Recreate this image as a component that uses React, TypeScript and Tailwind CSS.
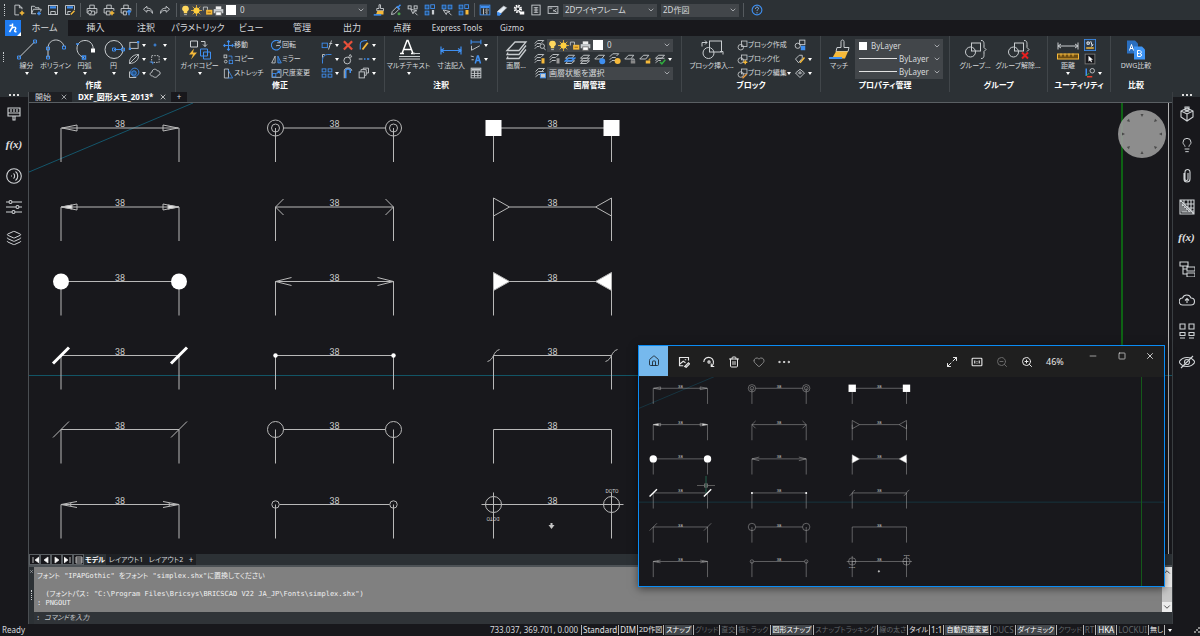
import React from "react";
import clsx from "clsx";
import {
  ChevronDown,
  CloudUpload,
  Ellipsis,
  EyeOff,
  Heart,
  House,
  Layers,
  Lightbulb,
  Maximize2,
  Minus,
  Paperclip,
  Square,
  Trash2,
  X,
  ZoomIn,
  ZoomOut,
} from "lucide-react";

const W = "#c9cdd0";
const B = "#3f8ff0";
const Y = "#f5b93a";

//small drawings, all on a 16 x 16 grid
const icons: Record<string, React.ReactNode> = {
  newFile: (
    <>
      <path d="M12 7V5L8.500 1.500H2.500v13H8M8.500 1.500V5H12" />
      <path d="M12 9v6M9 12h6" stroke={Y} strokeWidth="2" />
    </>
  ),
  open: (
    <>
      <path d="M2 13V3h4l1.500 2H12v2M2 13l2.500-6H15l-1 3M2 13h6" />
      <path d="M9.500 12.500h5M12 10v5" stroke={B} strokeWidth="2" />
    </>
  ),
  save: (
    <>
      <rect x="2" y="2" width="12" height="12" />
      <path d="M4 4.500h8" stroke={B} strokeWidth="3" />
      <path d="M5 14v-4h6v4" />
    </>
  ),
  saveAs: (
    <>
      <path d="M8 14H2V2h12v6M5 13v-3h4" />
      <path d="M4 4.500h8" stroke={B} strokeWidth="3" />
      <path d="M9 14l5-5" stroke={Y} strokeWidth="2" />
    </>
  ),
  print: (
    <>
      <path d="M5 6V1.500h6V6M4 12H1.500V6h13v6H12M4.500 9.500h7v5h-7z" />
      <circle cx="5" cy="11" r="2.500" fill="#2c3135" />
    </>
  ),
  printStar: (
    <>
      <path d="M5 6V1.500h6V6M4 12H1.500V6h13v3M4.500 9.500h5v5h-5z" />
      <path d="M12 9v6M9 12h6" stroke={Y} strokeWidth="2" />
    </>
  ),
  printUp: (
    <>
      <path d="M5 6V1.500h6V6M4 12H1.500V6h13v3M4.500 9.500h4v5h-4z" />
      <path d="M12 15V9M9.500 11L12 8.500l2.500 2.500" stroke={B} strokeWidth="2" />
    </>
  ),
  undo: <path d="M6.500 3L2 7l4.500 4V8.500c4 0 6 .5 7.500 4 0-5-3-7-7.500-7z" />,
  redo: <path d="M9.500 3L14 7l-4.500 4V8.500c-4 0-6 .5-7.500 4 0-5 3-7 7.500-7z" />,
  bulb: (
    <>
      <path d="M8 1a4.500 4.500 0 0 0-2.500 8.500V12h5V9.500A4.500 4.500 0 0 0 8 1z" fill="#ffd75e" stroke="none" />
      <path d="M6 14h4" />
    </>
  ),
  sun: (
    <>
      <path d="M8 0v16M0 8h16M2.500 2.500l11 11M13.500 2.500l-11 11" stroke={Y} />
      <circle cx="8" cy="8" r="4.500" fill="#ffcf3f" stroke="none" />
    </>
  ),
  lock: (
    <>
      <path d="M2 8V3h6v4" />
      <rect x="6" y="7" width="9" height="7" fill={Y} stroke="none" />
      <path d="M8 10.500h5" stroke="#8a5a10" />
    </>
  ),
  printer: (
    <>
      <rect x="4" y="2" width="8" height="4" fill="#eee" stroke="none" />
      <rect x="1" y="6" width="14" height="6" fill={W} stroke="none" />
      <rect x="4" y="10" width="8" height="5" fill="#fff" stroke="#666" />
    </>
  ),
  brush: (
    <>
      <path d="M8 1h2v5h4v3H5V6h3z" />
      <path d="M4 14l2-5h8v5z" fill={Y} stroke="none" />
      <path d="M1 14.500h10" stroke={B} strokeWidth="2" />
    </>
  ),
  dropper: (
    <>
      <path d="M2 14l1-4 6-6 3 3-6 6z" />
      <path d="M9 3l4 4M11 4l3-3" stroke={B} strokeWidth="2" />
      <circle cx="12" cy="13" r="2" fill="#4aa04a" stroke="none" />
    </>
  ),
  select: (
    <>
      <rect x="1.500" y="2.500" width="4" height="4" />
      <rect x="9.500" y="2.500" width="4" height="4" />
      <path d="M5 7l3 6 1-3 4-1zM10 11l4 4" />
    </>
  ),
  grid4: (
    <>
      <rect x="1.500" y="1.500" width="5" height="5" stroke={B} fill="#24507f" />
      <rect x="1.500" y="9.500" width="5" height="5" stroke={B} fill="#24507f" />
      <rect x="9" y="1" width="5" height="5" stroke={B} />
      <path d="M12 8v6" strokeWidth="3" />
    </>
  ),
  selectGrid: (
    <>
      <rect x="1.500" y="1.500" width="5" height="5" stroke={B} fill="#24507f" />
      <rect x="9.500" y="1.500" width="5" height="5" stroke={B} fill="#24507f" />
      <path d="M3 8l4 6 1-3 4-1zM10 11l4 4" />
    </>
  ),
  grid4y: (
    <>
      <rect x="1.500" y="1.500" width="5" height="5" stroke={B} fill="#24507f" />
      <rect x="1.500" y="9.500" width="5" height="5" stroke={B} fill="#24507f" />
      <rect x="9" y="1" width="5" height="5" stroke={B} />
      <path d="M12 8v6" stroke={Y} strokeWidth="4" />
    </>
  ),
  panel: (
    <>
      <rect x="1.500" y="1.500" width="13" height="13" stroke={B} />
      <path d="M2 4h12" stroke={B} strokeWidth="3" />
      <path d="M6 6v8M10.500 6v8M8 8h1M12 8h1M8 11h1" />
    </>
  ),
  eraser: (
    <>
      <path d="M2 10l8-7 4 2-8 8-4-1z" fill="#e6eef5" />
      <path d="M2 11l5 2-2 2H2z" fill={B} stroke={B} />
    </>
  ),
  gear: (
    <>
      <circle cx="6.500" cy="6.500" r="4" strokeWidth="3" strokeDasharray="2 1.140" stroke="#fff" />
      <circle cx="6.500" cy="6.500" r="2.500" stroke="#fff" />
      <rect x="9" y="10" width="6" height="4" fill="#fff" stroke="none" />
    </>
  ),
  sheet: (
    <>
      <rect x="2.500" y="1.500" width="11" height="13" />
      <path d="M5 5h6M5 8h6M5 11h6M8 4v8" />
    </>
  ),
  rename: (
    <>
      <rect x="1.500" y="3.500" width="13" height="9" />
      <path d="M3 5.500h4M9 10l4-4M8 8l5 3" />
    </>
  ),
  help: (
    <>
      <circle cx="8" cy="8" r="6.500" stroke={B} strokeWidth="1.500" />
      <path d="M6 6.500c0-3 4-3 4-.5 0 1.500-2 1.500-2 3M8 11v1.500" stroke="#8cc0ff" />
    </>
  ),
  rect: (
    <>
      <rect x="2.500" y="4.500" width="11" height="8" />
      <path d="M1 13h3M12 4h3" stroke={B} strokeWidth="3" />
    </>
  ),
  point: <path d="M8 6v4M6 8h4" stroke={B} strokeWidth="1.500" />,
  ellipse: <path d="M2 14C1 7 7 2 14 2c1 7-5 12-12 12zM2 14L14 2" />,
  region: (
    <>
      <rect x="3.500" y="3.500" width="10" height="9" strokeDasharray="2 1.500" />
      <path d="M1 12h4v3" stroke={B} />
    </>
  ),
  hatch: (
    <>
      <circle cx="9" cy="7" r="5.500" stroke={B} />
      <circle cx="8" cy="8" r="3" stroke={B} fill="#24507f" />
      <path d="M2 6v8h9" />
    </>
  ),
  cloud: <path d="M5 12c-5 0-4-5-1-5 0-5 6-5 7-2 5 0 5 6 1 6-1 4-6 3-7 1z" />,
  move: <path d="M8 1v14M1 8h14M6 3l2-2 2 2M6 13l2 2 2-2M3 6L1 8l2 2M13 6l2 2-2 2" stroke={B} strokeWidth="1.500" />,
  copy: (
    <>
      <rect x="1.500" y="1.500" width="4" height="4" />
      <rect x="9" y="9" width="5" height="5" stroke={B} />
      <circle cx="4" cy="11" r="2" />
      <path d="M8 3h5v4" stroke={B} />
    </>
  ),
  stretch: (
    <>
      <path d="M2 1.500h6v13H2z" />
      <path d="M7 2l7 12.500H7" stroke={B} />
    </>
  ),
  rotate: (
    <>
      <path d="M13 3a7 7 0 1 0 1.500 6" stroke={B} strokeWidth="1.500" />
      <path d="M8 8h5M8 8v1" stroke={W} />
      <path d="M13.500 0v4H9" />
    </>
  ),
  mirror: (
    <>
      <path d="M6 3v10H1z" />
      <path d="M10 3v10h5z" stroke={B} fill="#24507f" />
    </>
  ),
  scale: (
    <>
      <rect x="1.500" y="2.500" width="13" height="11" />
      <rect x="2" y="8" width="5" height="5" stroke={B} />
      <path d="M8 8l4-3M9 4.500h3.500V8" stroke={B} strokeWidth="1.500" />
    </>
  ),
  trim: (
    <>
      <rect x="1.500" y="5.500" width="7" height="6" stroke={B} />
      <path d="M10 14l4-12M11 6h4" />
    </>
  ),
  erase: <path d="M2.500 3L13.500 14M13.500 3L2.500 14" stroke="#e8503a" strokeWidth="3" />,
  edit: (
    <>
      <path d="M3 14V7c0-4 4-5 9-5" stroke={B} strokeWidth="1.500" />
      <path d="M6 14l7-9" stroke={Y} strokeWidth="2.500" />
    </>
  ),
  fillet: (
    <>
      <path d="M2 14V9c0-4 3-7 7-7h5" stroke={B} />
      <path d="M2 2v4M2 2l3 0" />
    </>
  ),
  explode: (
    <>
      <circle cx="7" cy="10" r="4.500" />
      <path d="M9 5l2-3 2 3-3 1" />
    </>
  ),
  breakLine: (
    <>
      <path d="M1 8h5" />
      <path d="M8 8h2M12 8h3" stroke={B} strokeWidth="2" />
    </>
  ),
  array: (
    <g stroke={B}>
      <rect x="1.500" y="2.500" width="5" height="4" />
      <rect x="9.500" y="2.500" width="5" height="4" />
      <rect x="1.500" y="9.500" width="5" height="4" />
      <rect x="9.500" y="9.500" width="5" height="4" />
    </g>
  ),
  join: (
    <>
      <path d="M5 15V5c0-3 6-3 6 0v3" stroke={B} strokeWidth="2" />
      <path d="M3 15V5c0-5 10-5 10 0" />
    </>
  ),
  offset: (
    <>
      <rect x="1.500" y="6.500" width="7" height="8" />
      <path d="M4 6V3.500h7V11H9M7 3V1.500h7V8h-3" />
    </>
  ),
  dimAlign: (
    <>
      <path d="M1.500 1v6M14.500 1v6M1.500 4h13" stroke={B} strokeWidth="1.500" />
      <path d="M2 9v6M2 15L13 9" />
    </>
  ),
  textA: (
    <>
      <path d="M1 4l4 1M2 9h3" />
      <path d="M7 14l3-10h1l3 10M8 10h5" stroke={B} strokeWidth="2" />
    </>
  ),
  table: (
    <>
      <rect x="1.500" y="1.500" width="13" height="13" />
      <path d="M1.500 5h13M1.500 8.500h13M1.500 11.500h13M6 5v9M10.500 5v9" />
      <path d="M2 3h12" strokeWidth="2" />
    </>
  ),
  layer: <path d="M2 14l4-3.500h8L10 14zM2 10.500L6 7h8l-4 3.500zM2 7l4-4h8l-4 4z" />,
  layerBulb: (
    <>
      <path d="M1 13l3-3h5M1 9.500L4 6h5M1 6l4-4h8l-3 3" />
      <path d="M12 7v7" stroke={Y} strokeWidth="4" />
    </>
  ),
  layerGray: (
    <>
      <path d="M1 13l3-3h5M1 9.500L4 6h5M1 6l4-4h8l-3 3" />
      <path d="M12 7v7" strokeWidth="4" stroke="#999" />
    </>
  ),
  layerBlue: (
    <>
      <path d="M2 14l4-3.500h8L10 14zM2 7l4-4h8l-4 4z" />
      <path d="M2 10.500L6 7h8l-4 3.500z" stroke={B} strokeWidth="2" />
    </>
  ),
  layerFreeze: (
    <>
      <path d="M1 8l5-5h8l-4 5z" />
      <circle cx="11" cy="11" r="4" fill={B} stroke="none" />
    </>
  ),
  layerSun: (
    <>
      <path d="M1 13l3-3h4M1 9l3-3h5M1 5l4-4h8l-3 3" />
      <circle cx="11.500" cy="10.500" r="4" fill={Y} stroke="none" />
    </>
  ),
  layerLock: (
    <>
      <path d="M1 8l5-5h7l-4 5z" />
      <rect x="9" y="10" width="6" height="4" fill="#888" stroke="none" />
      <path d="M10.500 10V8h3v2" />
    </>
  ),
  layerOpen: (
    <>
      <path d="M1 8l5-5h7l-4 5z" />
      <rect x="9" y="10" width="6" height="4" fill={Y} stroke="none" />
      <path d="M13.500 10V8h2" stroke={Y} />
    </>
  ),
  layerCheck: (
    <>
      <path d="M2 13l4-3h3M2 10L6 7h8M2 7l4-4h8l-4 4z" />
      <path d="M8 12l2.500 2.500L15 9" stroke="#2fae3d" strokeWidth="2" />
    </>
  ),
  layerState: (
    <>
      <path d="M2 13l4-3h2M2 9.500L6 6h7M2 6l4-4h8l-4 4" />
      <rect x="8.500" y="8.500" width="7" height="6" fill={W} stroke={B} />
    </>
  ),
  layerSearch: (
    <>
      <path d="M1 13l3-3h3M1 9.500L4 6h5M1 6l4-4h8l-3 3" />
      <circle cx="11" cy="9.500" r="3" />
      <path d="M13 12l2.500 3" />
    </>
  ),
  block: (
    <>
      <rect x="6.500" y="1.500" width="8" height="8" />
      <circle cx="5.500" cy="10.500" r="4" />
    </>
  ),
  blockStar: (
    <>
      <rect x="6.500" y="1.500" width="8" height="7" />
      <circle cx="5.500" cy="9.500" r="4" />
      <path d="M12 9v6M9 12h6" stroke={Y} strokeWidth="2" />
    </>
  ),
  blockEdit: (
    <>
      <rect x="6.500" y="1.500" width="8" height="7" />
      <circle cx="5.500" cy="9.500" r="4" />
      <path d="M8 15l6-6" stroke="#ef9b3a" strokeWidth="2" />
    </>
  ),
  attach: (
    <>
      <rect x="7.500" y="1.500" width="7" height="6" />
      <circle cx="5" cy="9" r="3.500" />
      <rect x="9" y="9" width="6" height="6" fill={B} stroke="none" />
    </>
  ),
  tagEdit: (
    <>
      <path d="M2 8l5-5h4v4l-5 6z" />
      <path d="M8 13l6-7" stroke={Y} strokeWidth="2" />
    </>
  ),
  tag: <path d="M2 8l6-5 6 5-6 6zM5 8h6M8 5v5" />,
  pick: (
    <>
      <rect x="0.500" y="0.500" width="15" height="15" stroke={B} fill="#2d3b4a" />
      <path d="M4 4h3v3H4zM9 3l2 6M12 7l-2 3" stroke="#fff" />
      <path d="M3 12h10" stroke={Y} strokeWidth="2" />
    </>
  ),
  cursor: (
    <>
      <rect x="1.500" y="1.500" width="13" height="13" fill="#18181c" stroke="#777" />
      <path d="M6 3.500v8l2-2 1.500 3 1-1L9.500 9H12z" fill="#fff" stroke="none" />
    </>
  ),
  axes: (
    <>
      <path d="M3 2v10" stroke={B} strokeWidth="2" />
      <path d="M4 13h7" stroke="#e8402f" strokeWidth="2" />
      <circle cx="11" cy="5" r="3" />
      <path d="M3 12l4-4" stroke="#3cb14a" />
    </>
  ),
};

//large ribbon drawings on a 24 x 20 grid
const bigIcons: Record<string, React.ReactNode> = {
  line: (
    <>
      <path d="M4 18L20 2" />
      <path d="M2.500 16.500h3v3h-3zM18.500.5h3v3h-3z" stroke={B} />
    </>
  ),
  poly: (
    <>
      <path d="M4 18V9c0-11 14-11 16-2" />
      <path d="M2.500 16.500h3v3h-3zM2.500 7.500h3v3h-3zM18.500 6.500h3v3h-3z" stroke={B} />
    </>
  ),
  arc: (
    <>
      <path d="M11 18C1 15 2 1 12 1c5 0 9 4 8 10" />
      <path d="M9.500 16.500h3v3h-3zM3 4.500h3" stroke={B} strokeWidth="1.500" />
      <rect x="18" y="9" width="4" height="4" fill="#fff" stroke="none" />
    </>
  ),
  circle: (
    <>
      <circle cx="12" cy="10" r="9" />
      <path d="M12 10h8M10.500 8.500h3v3h-3zM19.500 8.500h3v3h-3z" stroke={B} />
    </>
  ),
  guide: (
    <>
      <path d="M2.500 1.500h7v6h-7zM13 2h4v5M15 5l2 2 2-2" />
      <path d="M6 9l-5 6h4l-2 5 6-7H5z" fill={Y} stroke="none" />
      <path d="M12.500 9.500h7v7h-7zM15.500 12.500h7v7h-7z" stroke={B} />
    </>
  ),
  mtext: (
    <>
      <path d="M5 14L10 1h1l5 13M7 10h7M3 14h4M14 14h4" strokeWidth="1.500" stroke="#fff" />
      <path d="M16 14h7M2 17h21M2 19.500h21" />
    </>
  ),
  dim: <path d="M2 7v8M22 7v8M2 11h20M5 9l-3 2 3 2M19 9l3 2-3 2" stroke={B} strokeWidth="1.200" />,
  layers: (
    <path d="M3 11l8-8.500h11L15 11zM4 13l-1 2h12l7-9M4 17l-1 2h12l7-9" strokeWidth="1.300" />
  ),
  insert: (
    <>
      <rect x="9.500" y="1.500" width="12" height="11" />
      <circle cx="8.500" cy="13.500" r="5.500" />
      <path d="M2 7V3h5M5 1l2 2-2 2M20 12h3v3" />
    </>
  ),
  match: (
    <>
      <path d="M14 8V2c0-2 3-2 3 0v6h5l-1 4H9l1-4z" />
      <path d="M9 12h12l-3 7H5z" fill={Y} stroke="none" />
      <path d="M2 18.500h13" stroke={B} strokeWidth="2" />
    </>
  ),
  group: (
    <>
      <rect x="8.500" y="3.500" width="9" height="8" />
      <circle cx="7.500" cy="12.500" r="5" />
      <path d="M18 1c3 0 3 2 3 4v3l2 2-2 2v3c0 2 0 4-3 4" />
    </>
  ),
  ungroup: (
    <>
      <rect x="8.500" y="3.500" width="9" height="8" />
      <circle cx="7.500" cy="12.500" r="5" />
      <path d="M18 1c3 0 3 2 3 4v3l2 2-2 2" />
      <path d="M16 13l6 6M22 13l-6 6" stroke="#e81f1f" strokeWidth="2" />
    </>
  ),
  measure: (
    <>
      <path d="M2 3v7M22 3v7M2 6.500h20M5 4.500l-3 2 3 2M19 4.500l3 2-3 2" />
      <rect x="1.500" y="14.500" width="21" height="5" stroke={Y} fill="#6e4d12" />
      <path d="M5 14v3M9 14v3M13 14v3M17 14v3" stroke={Y} />
    </>
  ),
  compare: (
    <>
      <path d="M3 1h8l3 3v10H3z" fill="#2a6fc0" stroke="none" />
      <path d="M10 7h8l3 3v10H10z" fill="#3f95f5" stroke="none" />
      <path d="M5.500 11L7.500 5l2 6M6 9h3M13.500 11v6h2.500c2 0 2-3 0-3 2 0 1.500-3-.5-3zM13.500 14h2" stroke="#fff" />
    </>
  ),
};

const Icon = ({ name, className = "size-3" }: { name: string; className?: string }) => (
  <svg viewBox="0 0 16 16" fill="none" stroke={W} strokeWidth="1.2" className={clsx("shrink-0", className)} aria-hidden="true">
    {icons[name]}
  </svg>
);

const Caret = () => (
  <svg viewBox="0 0 4 3" className="h-[3px] w-1 shrink-0" aria-hidden="true">
    <path d="M0 0h4L2 3z" fill="#fff" />
  </svg>
);

const IconButton = ({ name, caret, label, className }: { name: string; caret?: boolean; label?: string; className?: string }) => (
  <button aria-label={label || name} className={clsx("flex h-3.5 items-center", className)}>
    <Icon name={name} />
    {caret && (
      <span className="ml-0.5">
        <Caret />
      </span>
    )}
  </button>
);

const TextButton = ({ name, text, caret }: { name: string; text: string; caret?: boolean }) => (
  <button className="flex h-3.5 items-center text-[7px] whitespace-nowrap">
    <Icon name={name} className="size-[11px]" />
    {text}
    {caret && <Caret />}
  </button>
);

const BigButton = ({ name, text, caret, className }: { name: string; text: string; caret?: boolean; className: string }) => (
  <button className={clsx("flex shrink-0 flex-col items-center pt-px", className)}>
    <svg viewBox="0 0 24 20" fill="none" stroke={W} className="h-[21px] w-6" aria-hidden="true">
      {bigIcons[name]}
    </svg>
    <span className="h-[11px] text-[7px] leading-[11px] whitespace-nowrap">{text}</span>
    {caret && (
      <span className="mt-px">
        <Caret />
      </span>
    )}
  </button>
);

const Panel = ({ title, className, children }: { title: string; className: string; children: React.ReactNode }) => (
  <section className={clsx("flex shrink-0 flex-col border-r border-[#41464a] pt-0.5", className)}>
    <div className="flex h-[42px]">{children}</div>
    <h2 className="text-center text-[8px] leading-[10px] font-bold text-white">{title}</h2>
  </section>
);

const SelectBox = ({ label, value, className, children }: { label: string; value: string; className?: string; children?: React.ReactNode }) => (
  <div className={clsx("flex shrink-0 items-center bg-[#42464a]", className)}>
    {children}
    <select aria-label={label} className="h-full min-w-0 flex-1 appearance-none bg-transparent pl-0.5 text-[8px] outline-none">
      <option>{value}</option>
    </select>
    <ChevronDown className="mr-0.5 size-2 shrink-0" />
  </div>
);

const LayerMarks = () => (
  <>
    <Icon name="bulb" className="size-[11px]" />
    <Icon name="sun" className="size-[11px]" />
    <Icon name="lock" className="size-[11px]" />
    <Icon name="printer" className="size-[11px]" />
    <span className="mx-0.5 size-2.5 shrink-0 bg-white" />
  </>
);

const Separator = ({ className }: { className: string }) => (
  <span className={clsx("flex h-3.5 shrink-0 justify-center", className)}>
    <span className="w-px bg-[#555a5e]" />
  </span>
);

const QuickButtons = ({ names }: { names: string[] }) => (
  <>
    {names.map((name) => (
      <button key={name} aria-label={name} className="flex w-[17px] shrink-0 justify-center">
        <Icon name={name} />
      </button>
    ))}
  </>
);

const QuickBar = () => (
  <div className="flex h-5 items-center bg-[#2c3135]">
    <span className="w-2.5 pl-1">
      <span className="block h-3 w-px border-l border-dotted border-[#c9cdd0]" />
    </span>
    <QuickButtons names={["newFile", "open", "save", "saveAs"]} />
    <Separator className="w-[5px]" />
    <QuickButtons names={["print", "printStar", "printUp"]} />
    <Separator className="w-[5px]" />
    <QuickButtons names={["undo", "redo"]} />
    <Separator className="w-[7px]" />
    <SelectBox label="画層" value="0" className="h-[13px] w-[187px]">
      <LayerMarks />
    </SelectBox>
    <div className="ml-[3px] flex">
      <QuickButtons names={["brush", "dropper", "select", "grid4", "selectGrid", "grid4y"]} />
    </div>
    <Separator className="w-1" />
    <QuickButtons names={["panel", "eraser", "gear", "sheet", "rename"]} />
    <SelectBox label="表示スタイル" value="2Dワイヤフレーム" className="ml-0.5 h-[13px] w-[94px]" />
    <SelectBox label="ワークスペース" value="2D作図" className="ml-1 h-[13px] w-[78px]" />
    <Separator className="w-[9px]" />
    <QuickButtons names={["help"]} />
  </div>
);

const menuTabs = [
  { name: "ホーム", width: "w-[47px] bg-[#2c3135]" },
  { name: "挿入", width: "w-[55px]" },
  { name: "注釈", width: "w-[46px]" },
  { name: "パラメトリック", width: "w-[58px]" },
  { name: "ビュー", width: "w-[48px]" },
  { name: "管理", width: "w-[54px]" },
  { name: "出力", width: "w-[46px]" },
  { name: "点群", width: "w-[54px]" },
  { name: "Express Tools", width: "w-[56px]" },
  { name: "Gizmo", width: "w-[54px]" },
];

const MenuTabs = () => (
  <nav className="flex h-4 bg-[#18181c]">
    <div className="w-[21px] bg-[#2c3135] pl-[5px]">
      <button aria-label="BricsCAD" className="flex size-4 items-center justify-center bg-[#1f7cf2]">
        <svg viewBox="0 0 16 16" className="size-4" fill="none" stroke="#fff" strokeWidth="1.5">
          <path d="M7.500 3.500v3.500L4.500 12M4.500 5.500h3M7.500 8c3-2 4 0 2.500 2-1 1.500 0 2 1.500 1.500" />
          <path d="M16 12v4h-4z" fill="#fff" stroke="none" />
        </svg>
      </button>
    </div>
    {menuTabs.map((tab) => (
      <button
        key={tab.name}
        className={clsx("shrink-0 whitespace-nowrap", tab.width, tab.name === "Express Tools" || tab.name === "Gizmo" ? "text-[8px]" : "text-[9px]")}
      >
        {tab.name}
      </button>
    ))}
  </nav>
);

const Ribbon = () => (
  <div className="flex h-14 overflow-hidden bg-[#2c3135]">
    <span className="w-3 shrink-0 pt-4 pl-[3px]">
      <span className="block h-2.5 w-px border-l border-dotted border-[#c9cdd0]" />
    </span>
    <Panel title="作成" className="w-[164px]">
      <BigButton name="line" text="線分" caret className="w-[29px]" />
      <BigButton name="poly" text="ポリライン" caret className="w-[29px]" />
      <BigButton name="arc" text="円弧" caret className="w-[29px]" />
      <BigButton name="circle" text="円" caret className="w-[29px]" />
      <div className="grid grid-cols-[21px_21px]">
        <IconButton name="rect" caret />
        <IconButton name="point" caret />
        <IconButton name="ellipse" caret />
        <IconButton name="region" caret />
        <IconButton name="hatch" caret />
        <IconButton name="cloud" />
      </div>
    </Panel>
    <Panel title="修正" className="w-[209px]">
      <BigButton name="guide" text="ガイドコピー" caret className="w-[47px]" />
      <div className="flex w-12 flex-col">
        <TextButton name="move" text="移動" />
        <TextButton name="copy" text="コピー" />
        <TextButton name="stretch" text="ストレッチ" />
      </div>
      <div className="flex w-[50px] flex-col">
        <TextButton name="rotate" text="回転" />
        <TextButton name="mirror" text="ミラー" />
        <TextButton name="scale" text="尺度変更" />
      </div>
      <div className="grid grid-cols-[21px_16px_20px]">
        <IconButton name="trim" caret />
        <IconButton name="erase" />
        <IconButton name="edit" caret />
        <IconButton name="fillet" caret />
        <IconButton name="explode" />
        <IconButton name="breakLine" caret />
        <IconButton name="array" caret />
        <IconButton name="join" />
        <IconButton name="offset" caret />
      </div>
    </Panel>
    <Panel title="注釈" className="w-[113px]">
      <BigButton name="mtext" text="マルチテキスト" caret className="w-[47px]" />
      <BigButton name="dim" text="寸法記入" className="w-[38px]" />
      <div className="flex flex-col">
        <IconButton name="dimAlign" caret />
        <IconButton name="textA" caret />
        <IconButton name="table" />
      </div>
    </Panel>
    <Panel title="画層管理" className="w-[184px]">
      <BigButton name="layers" text="画層..." className="w-[36px]" />
      <div className="flex flex-col">
        <div className="flex h-3.5 items-center gap-px">
          <Icon name="layerSearch" />
          <SelectBox label="現在の画層" value="0" className="h-[13px] w-[126px]">
            <LayerMarks />
          </SelectBox>
        </div>
        <div className="flex gap-[3px]">
          <IconButton name="layerBulb" />
          <IconButton name="layerGray" />
          <IconButton name="layerBlue" />
          <IconButton name="layer" />
          <IconButton name="layerFreeze" />
          <IconButton name="layerSun" />
          <IconButton name="layerLock" />
          <IconButton name="layerOpen" />
          <IconButton name="layerCheck" caret />
        </div>
        <div className="flex h-3.5 items-center gap-px">
          <Icon name="layerState" />
          <SelectBox label="画層状態" value="画層状態を選択" className="h-[13px] w-[126px]" />
        </div>
      </div>
    </Panel>
    <Panel title="ブロック" className="w-[139px]">
      <BigButton name="insert" text="ブロック挿入..." className="ml-1 w-[51px]" />
      <div className="flex w-[57px] flex-col">
        <TextButton name="block" text="ブロック作成" />
        <TextButton name="blockStar" text="ブロック化" />
        <TextButton name="blockEdit" text="ブロック編集" caret />
      </div>
      <div className="flex flex-col">
        <IconButton name="attach" />
        <IconButton name="tagEdit" caret />
        <IconButton name="tag" caret />
      </div>
    </Panel>
    <Panel title="プロパティ管理" className="w-[129px]">
      <BigButton name="match" text="マッチ" className="ml-0.5 w-8" />
      <div className="mt-px flex h-10 w-[88px] flex-col bg-[#42464a]">
        <SelectBox label="色" value="ByLayer" className="h-[13px]">
          <span className="mr-0.5 ml-1 size-2 bg-white" />
        </SelectBox>
        <SelectBox label="線種" value="ByLayer" className="h-[13px]">
          <span className="ml-1 h-px w-[38px] bg-[#e3e3e3]" />
        </SelectBox>
        <SelectBox label="線の太さ" value="ByLayer" className="h-[13px]">
          <span className="ml-1 h-px w-[38px] bg-[#e3e3e3]" />
        </SelectBox>
      </div>
    </Panel>
    <Panel title="グループ" className="w-[98px]">
      <BigButton name="group" text="グループ..." className="ml-[5px] w-10" />
      <BigButton name="ungroup" text="グループ解除..." className="w-[46px]" />
    </Panel>
    <Panel title="ユーティリティ" className="w-[63px]">
      <BigButton name="measure" text="距離" caret className="ml-1 w-8" />
      <div className="flex flex-col">
        <IconButton name="pick" />
        <IconButton name="cursor" />
        <IconButton name="axes" caret />
      </div>
    </Panel>
    <section className="flex w-[50px] shrink-0 flex-col pt-0.5">
      <div className="flex h-[42px] justify-center">
        <BigButton name="compare" text="DWG比較" className="w-10" />
      </div>
      <h2 className="text-center text-[8px] leading-[10px] font-bold text-white">比較</h2>
    </section>
  </div>
);

//end marks are drawn for the left side, the right side is the same mark mirrored
const marks: Record<string, React.ReactNode> = {
  closedBlank: <path d="M1 0L16-3V3z" />,
  closed: (
    <>
      <path d="M1 0L16-3V3z" />
      <path d="M0 0L11-2V2z" fill="#e5e5e5" />
    </>
  ),
  dot: <circle r="8" fill="#fff" stroke="none" />,
  archTick: <path d="M-8 8L8-8" stroke="#fff" strokeWidth="3" />,
  oblique: <path d="M-8 8L8-8" />,
  arrow: <path d="M16-3L0 0L16 3M9-1L11 0L9 1" />,
  origin2: (
    <>
      <circle r="8" />
      <circle r="4" />
    </>
  ),
  open90: <path d="M8-8L0 0L8 8" />,
  open30: <path d="M16-4L0 0L16 4" />,
  dotSmall: <circle r="2.200" fill="#fff" stroke="none" />,
  circle: <circle r="8" />,
  circleSmall: <circle r="3.700" />,
  box: <rect x="-8" y="-8" width="16" height="16" fill="#fff" stroke="none" />,
  datumBlank: <path d="M0-9L16 0L0 9z" />,
  datum: <path d="M0-9L16 0L0 9z" fill="#fff" />,
  integral: <path d="M-6 6C1 4-1-4 6-6" />,
  none: null,
  cross: (
    <>
      <circle r="8" />
      <path d="M-12 0H8M0-12V8" />
    </>
  ),
};

const flipped = ["archTick", "oblique", "integral"];

const dimensions = [
  { x: 61, rows: ["closedBlank", "closed", "dot", "archTick", "oblique", "arrow"] },
  { x: 275.5, rows: ["origin2", "open90", "open30", "dotSmall", "circle", "circleSmall"] },
  { x: 493.5, rows: ["box", "datumBlank", "datum", "integral", "none", "cross"] },
];
const rowY = [128, 207, 281.5, 355.5, 429.5, 504.5];
const insets: Record<string, number> = { origin2: 8, circle: 8, circleSmall: 4, datumBlank: 16, datum: 16 };

const Drawing = () => (
  <>
    <path d="M29 172L193 103" stroke="#15566b" />
    <path d="M29 375.500H3000" stroke="#125566" />
    <g fill="none" stroke="#b8b8b8">
      {dimensions.map((column) =>
        column.rows.map((mark, index) => {
          const inset = insets[mark] || 0;
          return (
            <g key={mark} transform={`translate(${column.x} ${rowY[index]})`}>
              <path d={`M${inset} 0H${118 - inset}M0 0V34M118 0V34`} />
              {marks[mark]}
              <g transform={flipped.includes(mark) ? "translate(118 0)" : "translate(118 0) scale(-1 1)"}>{marks[mark]}</g>
              <text x="59" y="-1" textAnchor="middle" fill="#c8c8c8" stroke="none" className="font-['Roboto',sans-serif] text-[9px]">
                38
              </text>
            </g>
          );
        })
      )}
    </g>
    <g fill="#d0d0d0" textAnchor="middle" className="font-['Roboto',sans-serif] text-[5px]">
      <text x="612" y="493">DOTO</text>
      <text transform="translate(493 517) rotate(180)">DOTO</text>
    </g>
    <path d="M550.500 523h2v2h2l-1.500 2-1.500 2-1.500-2-1.500-2h2z" fill="#c4c4c4" />
  </>
);

const Canvas = () => (
  <svg className="block min-h-[300px] w-full flex-1 bg-[#18181c]" role="img" aria-label="DXF_図形メモ_2013">
    <g transform="translate(-29 -103)">
      <Drawing />
      <path d="M1122 103V3000" stroke="#0b7d12" strokeWidth="1.500" />
      <path d="M1168.500 103V3000" stroke="#b4b4b4" />
      <circle cx="1142" cy="134" r="24" fill="#9a9a9a" fillOpacity="0.9" />
      <g fill="#4a4a4a">
        {[0, 45, 90, 135, 180, 225, 270, 315].map((angle) => (
          <path key={angle} d="M-1.500-20h3l-1.500 3z" transform={`translate(1142 134) rotate(${angle})`} />
        ))}
      </g>
    </g>
  </svg>
);

const DocTabs = () => (
  <div className="flex h-2.5 bg-[#2c3135] text-[8px] leading-[10px]">
    <div className="flex w-[43px] items-center justify-between bg-[#1e2024] pr-1 pl-1.5">
      <button>開始</button>
      <button aria-label="閉じる">
        <X className="size-2" />
      </button>
    </div>
    <div className="flex w-[99px] items-center justify-between pr-1 pl-1.5 font-bold whitespace-nowrap text-white">
      <button>DXF_図形メモ_2013*</button>
      <button aria-label="閉じる">
        <X className="size-2" />
      </button>
    </div>
    <button aria-label="新しいタブ" className="w-4 bg-[#18181c]">
      +
    </button>
  </div>
);

const navPaths = ["M2 1v6M8 1L4 4l4 3z", "M6 1L2 4l4 3z", "M2 1l4 3-4 3z", "M6 1v6M0 1l4 3-4 3z", "M1 1h6v6H1zM1 3h6M1 5h6"];

const LayoutTabs = () => (
  <div className="flex h-[11px] bg-[#2c3135] leading-[11px]">
    {navPaths.map((d, index) => (
      <button key={index} aria-label={`レイアウト移動 ${index + 1}`} className="flex w-[11px] items-center justify-center border border-[#5a5f63] bg-[#18181c]">
        <svg viewBox="0 0 8 8" className="size-2" fill={index === 4 ? "none" : "#fff"} stroke="#ddd" strokeWidth="0.800">
          <path d={d} />
        </svg>
      </button>
    ))}
    <button className="w-[22px] text-[7px] font-bold whitespace-nowrap text-white">モデル</button>
    <button className="w-10 bg-[#1e2024] text-[7px] whitespace-nowrap">レイアウト1</button>
    <button className="w-10 bg-[#1e2024] text-[7px] whitespace-nowrap">レイアウト2</button>
    <button aria-label="新しいレイアウト" className="w-2.5 bg-[#1e2024] text-[8px]">
      +
    </button>
  </div>
);

const CommandLine = () => (
  <div className="flex h-[59px] border-t-2 border-[#4d5256] bg-[#2c3135] font-['DejaVu_Sans_Mono','Noto_Sans_CJK_JP',monospace]">
    <div className="flex w-[5px] flex-col items-center pt-0.5">
      <X className="size-[5px]" />
      <span className="mt-4 h-2.5 w-px border-l border-dotted border-[#c9cdd0]" />
    </div>
    <div className="flex flex-1 flex-col">
      <div className="flex h-[45px] bg-[#808080]">
        <div className="flex-1 pt-[5px] pl-[3px] text-[7px] leading-[9px] whitespace-pre text-[#f0f0f0]">
          <p>フォント "IPAPGothic" をフォント "simplex.shx"に置換してください</p>
          <p className="mt-[9px]">{'  (フォントパス: "C:\\Program Files\\Bricsys\\BRICSCAD V22 JA_JP\\Fonts\\simplex.shx")'}</p>
          <p>: PNGOUT</p>
        </div>
        <div className="flex w-2.5 flex-col items-center justify-between bg-[#ececec] text-[#333]">
          <ChevronDown className="size-2.5 rotate-180" />
          <span className="mt-2.5 w-full flex-1 bg-[#c6c6c6]" />
          <ChevronDown className="size-2.5" />
        </div>
      </div>
      <label className="flex h-3 items-center gap-1 bg-[#303438] pl-0.5 text-[7px]">
        :
        <input
          aria-label="コマンド"
          placeholder="コマンドを入力"
          className="min-w-0 flex-1 bg-transparent italic outline-none placeholder:text-[#c9cdd0]"
        />
      </label>
    </div>
  </div>
);

const Fx = () => <span className="font-['Liberation_Serif',serif] text-[11px] font-bold text-[#e3e3e3] italic">f(x)</span>;

const leftTools = [
  <path d="M2 2h12v8H2zM2 7h12M5 3v3M8 3v3M11 3v3M7 10v4h2v-4" />,
  <Fx />,
  <>
    <circle cx="8" cy="8" r="7.300" />
    <path d="M5 8h1M7.500 5.500c1.500 1 1.500 4 0 5M9.500 3.500c3 2 3 7 0 9" />
  </>,
  <path d="M0 3h3M6 3h10M3 3a1.500 1.500 0 1 0 3 0 1.500 1.500 0 1 0-3 0M0 8h10M13 8h3M10 8a1.500 1.500 0 1 0 3 0 1.500 1.500 0 1 0-3 0M0 13h6M9 13h7M6 13a1.500 1.500 0 1 0 3 0 1.500 1.500 0 1 0-3 0" />,
  <Layers className="size-4" strokeWidth={1.5} />,
];

const rightTools = [
  <path d="M8 2l6 3v6l-6 4-6-4V5zM2 5l6 3 6-3M8 8v7M5 3.500l6 3M11 3.500l-6 3M6 1h4v3H6z" />,
  <Lightbulb className="size-4" strokeWidth={1.5} />,
  <path d="M5 5v6a3 3 0 0 0 6 0V4a2.500 2.500 0 0 0-4-2c-.7.600-1 1.200-1 2v7c0 2 3 2 3 0V5" />,
  <path d="M1 1h14v14H1zM1 1l14 14M5 1v4h10M9 1v8h6M12 1v11h3M3 5v8h8zM5 8v5M7 10v3" />,
  <Fx />,
  <path d="M1 1h8v4H1zM4 5v8h4M4 8h4M8 6h8v4H8zM8 12h8v4H8z" />,
  <path d="M4 13a3.500 3.500 0 0 1-.5-7 4.500 4.500 0 0 1 8.500 0 3.500 3.500 0 0 1 0 7zM8 11V7M6 8.500L8 6.500l2 2" />,
  <path d="M1 1h5v5H1zM10 1h5v5h-5zM1 9.500h5v3H1zM10 9.500h5v3h-5zM1 15h5M10 15h5" />,
  <path d="M0 8c4-6 12-6 16 0-4 6-12 6-16 0zM5.500 8a2.500 2.500 0 1 0 5 0 2.500 2.500 0 1 0-5 0M2 14L14 2" />,
];

const SideBar = ({ tools, className, name }: { tools: React.ReactElement[]; className: string; name: string }) => (
  <aside aria-label={name} className={clsx("shrink-0 bg-[#18181c]", className)}>
    <div className="flex h-[5px] items-center justify-center bg-[#2c3135]">
      <span className="w-2.5 border-t-2 border-dotted border-[#dddddd]" />
    </div>
    {tools.map((tool, index) => (
      <button key={index} aria-label={`${name} ${index + 1}`} className="flex h-[31px] w-full items-center justify-center pt-0.5 text-[#d0d3d6]">
        {tool.type === "path" || tool.type === React.Fragment ? (
          <svg viewBox="0 0 16 16" className="size-4" fill="none" stroke="currentColor" strokeWidth="1.1">
            {tool}
          </svg>
        ) : (
          tool
        )}
      </button>
    ))}
  </aside>
);

const statusItems = [
  { text: "Standard", state: "plain" },
  { text: "DIM", state: "plain" },
  { text: "2D作図", state: "plain" },
  { text: "スナップ", state: "on" },
  { text: "グリッド", state: "off" },
  { text: "直交", state: "off" },
  { text: "極トラック", state: "off" },
  { text: "図形スナップ", state: "on" },
  { text: "スナップトラッキング", state: "off" },
  { text: "線の太さ", state: "off" },
  { text: "タイル", state: "plain" },
  { text: "1:1", state: "plain" },
  { text: "自動尺度変更", state: "on" },
  { text: "DUCS", state: "off" },
  { text: "ダイナミック", state: "on" },
  { text: "クワッド", state: "off" },
  { text: "RT", state: "off" },
  { text: "HKA", state: "on" },
  { text: "LOCKUI", state: "off" },
  { text: "無し", state: "plain" },
];

const StatusBar = () => (
  <footer className="flex h-3 items-center bg-[#18181c] pl-0.5 text-[7px] leading-[10px] whitespace-nowrap">
    <span className="flex-1 text-[8px]">Ready</span>
    <span className="mr-[3px] text-[8px]">733.037, 369.701, 0.000</span>
    {statusItems.map((item) => (
      <button
        key={item.text}
        className={clsx(
          "flex h-2.5 shrink-0 items-center border-l border-[#b5b5b5] px-px",
          /^[ -~]+$/.test(item.text) && "text-[8px]"
        )}
      >
        <span
          className={clsx(
            item.state === "on" && "bg-[#43474b] px-px text-white",
            item.state === "off" && "text-[#63676b]",
            item.state === "plain" && "text-[#e3e3e3]"
          )}
        >
          {item.text}
        </span>
      </button>
    ))}
    <span className="flex h-2.5 w-9 items-center border-l border-[#b5b5b5] pl-[3px]">
      <Caret />
      <svg viewBox="0 0 6 6" className="ml-auto size-1.5" fill="#8a8a8a" aria-hidden="true">
        <path d="M4 0h2v2H4zM2 2h2v2H2zM4 4h2v2H4zM0 4h2v2H0z" />
      </svg>
    </span>
  </footer>
);

const PhotoTool = ({ label, children, className }: { label: string; children: React.ReactNode; className?: string }) => (
  <button aria-label={label} className={clsx("flex w-[25px] items-center justify-center", className)}>
    {children}
  </button>
);

//photo viewer that floats over the CAD window
const PhotoWindow = () => (
  <div className="absolute right-[35px] bottom-[49px] flex h-[242px] w-[527px] flex-col border border-[#0a8cf5] bg-[#18181c] shadow-[0_2px_8px_rgba(0,0,0,0.5)]">
    <div className="flex h-[31px] shrink-0 bg-[#1f1f1f] text-[#e8e8e8]">
      <button aria-label="ホーム" className="mr-[3px] flex h-[30px] w-[29px] items-center justify-center bg-[#76b9ed] text-[#1f2a33]">
        <House className="size-3" strokeWidth={1.8} />
      </button>
      <PhotoTool label="編集">
        <svg viewBox="0 0 16 16" className="size-3" fill="none" stroke="currentColor" strokeWidth="1.5">
          <path d="M14 6V2H2v11h5M2 11l5-4 3 2M9 14l5-5 1.500 1.500L11 15zM9 5h2" />
        </svg>
      </PhotoTool>
      <PhotoTool label="回転">
        <svg viewBox="0 0 16 16" className="size-3" fill="none" stroke="currentColor" strokeWidth="1.5">
          <path d="M1 8a6.500 6.500 0 1 1 11 5M15 14h-4v-4" />
          <circle cx="8" cy="8" r="1.500" />
        </svg>
      </PhotoTool>
      <PhotoTool label="削除">
        <Trash2 className="size-3" />
      </PhotoTool>
      <PhotoTool label="お気に入り" className="text-[#8a8a8a]">
        <Heart className="size-3" />
      </PhotoTool>
      <PhotoTool label="その他">
        <Ellipsis className="size-4" strokeWidth={1.5} />
      </PhotoTool>
      <div className="flex-1" />
      <PhotoTool label="全画面">
        <Maximize2 className="size-3" />
      </PhotoTool>
      <PhotoTool label="実際のサイズ">
        <svg viewBox="0 0 16 16" className="size-3" fill="none" stroke="currentColor" strokeWidth="1.5">
          <rect x="1.500" y="3" width="13" height="10" rx="1" />
          <path d="M5 6v4M11 6v4M8 6.500v1M8 9v1" />
        </svg>
      </PhotoTool>
      <PhotoTool label="縮小" className="text-[#6a6a6a]">
        <ZoomOut className="size-3" />
      </PhotoTool>
      <PhotoTool label="拡大">
        <ZoomIn className="size-3" />
      </PhotoTool>
      <span className="flex w-10 items-center pl-[7px] text-[9px]">46%</span>
      <div className="flex h-5">
        <button aria-label="最小化" className="flex w-[28px] items-center justify-center">
          <Minus className="size-2.5" strokeWidth={1.5} />
        </button>
        <button aria-label="最大化" className="flex w-[29px] items-center justify-center">
          <Square className="size-2" />
        </button>
        <button aria-label="閉じる" className="flex w-[28px] items-center justify-center">
          <X className="size-2.5" />
        </button>
      </div>
    </div>
    <svg className="block min-h-0 w-full flex-1" role="img" aria-label="DXF_図形メモ_2013 46%">
      <g transform="translate(-639 -377)">
        <g transform="translate(625.2 329.4) scale(0.46)">
          <Drawing />
        </g>
        <path d="M1141.500 377V600" stroke="#14591a" />
        <path d="M697 485.500h18" stroke="#5a5a5a" />
        <path d="M706 476v17" stroke="#21604a" />
        <rect x="704.500" y="484" width="3" height="3" fill="none" stroke="#6d6d6d" />
      </g>
    </svg>
  </div>
);

const App = () => {
  return (
    <div className="relative flex min-h-screen flex-col overflow-hidden bg-[#18181c] font-['Noto_Sans','Noto_Sans_CJK_JP',sans-serif] text-[#d6d9dc] [font-feature-settings:'palt']">
      <QuickBar />
      <MenuTabs />
      <Ribbon />
      <div className="flex flex-1">
        <SideBar tools={leftTools} name="左パネル" className="w-7" />
        <main className="flex min-w-0 flex-1 flex-col border-l border-[#4a4e52]">
          <DocTabs />
          <div className="flex flex-1 flex-col border-t border-[#5a5f63]">
            <Canvas />
          </div>
          <LayoutTabs />
          <CommandLine />
        </main>
        <SideBar tools={rightTools} name="右パネル" className="w-7 border-l border-[#3a3e42]" />
      </div>
      <StatusBar />
      <PhotoWindow />
    </div>
  );
};

export default App;
